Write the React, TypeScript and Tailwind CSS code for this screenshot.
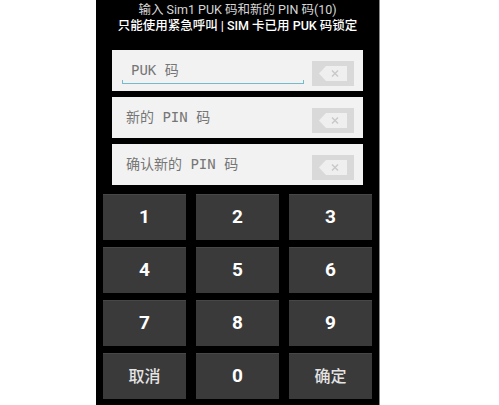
import React from 'react';

const cjk = '"Roboto", "Noto Sans CJK SC", sans-serif';
const mono = '"DejaVu Sans Mono", "Noto Sans CJK SC", monospace';

const ClearKey: React.FC = () => (
    <div className="w-[42px] h-[25px] bg-[#d9d9d9] flex items-center justify-center shrink-0">
        <svg width="28" height="15" viewBox="0 0 28 15">
            <polygon points="7,0 28,0 28,15 7,15 0,7.5" fill="#efefef" />
            <path d="M13 4.5 L19 10.5 M19 4.5 L13 10.5" stroke="#c8c8c8" strokeWidth="1.4" />
        </svg>
    </div>
);

const Field: React.FC<{ label: string; focused?: boolean }> = ({ label, focused }) => (
    <div className="h-[41px] bg-[#f2f2f2] flex items-end pb-[5px] pr-[9px]">
        <div className="relative flex-1 h-full flex items-center">
            <span
                className={`text-[14px] text-[#767676] ${focused ? 'pl-[19px]' : 'pl-[14px]'} pt-[5px]`}
                style={{ fontFamily: mono }}
            >
                {label}
            </span>
            {focused && (
                <div className="absolute left-[10px] right-[8px] bottom-[2px] h-[4px] border-b-[1.5px] border-x border-[#74bccb]" />
            )}
        </div>
        <ClearKey />
    </div>
);

const Key: React.FC<{ label: string; cjkLabel?: boolean }> = ({ label, cjkLabel }) => (
    <div
        className={`h-[46px] bg-[#3a3a3a] border-t border-[#474747] flex items-center justify-center ${
            cjkLabel ? 'text-[16px] text-[#e4e4e4] font-medium' : 'text-[19px] text-white font-bold'
        }`}
        style={{ fontFamily: cjk }}
    >
        {label}
    </div>
);

const keys = ['1', '2', '3', '4', '5', '6', '7', '8', '9', '取消', '0', '确定'];

const App: React.FC = () => {
    return (
        <div className="w-[499px] h-[405px] bg-white overflow-hidden">
            <div className="ml-[96px] w-[284px] h-[405px] bg-black border-r border-[#8a8a8a]">
                {/* status lines */}
                <div className="pt-[2px] text-center leading-[16px]" style={{ fontFamily: cjk }}>
                    <div className="text-[12.5px] text-[#d6d6d6]">输入 Sim1 PUK 码和新的 PIN 码(10)</div>
                    <div className="text-[12.5px] text-white font-medium">只能使用紧急呼叫 | SIM 卡已用 PUK 码锁定</div>
                </div>

                <div className="mt-[16px] px-[16px] flex flex-col gap-[6px]">
                    <Field label="PUK 码" focused />
                    <Field label="新的 PIN 码" />
                    <Field label="确认新的 PIN 码" />
                </div>

                <div className="mt-[9px] px-[7px] grid grid-cols-3 gap-x-[10px] gap-y-[7px]">
                    {keys.map(k => (
                        <Key key={k} label={k} cjkLabel={k.length > 1} />
                    ))}
                </div>
            </div>
        </div>
    );
};

export default App;
